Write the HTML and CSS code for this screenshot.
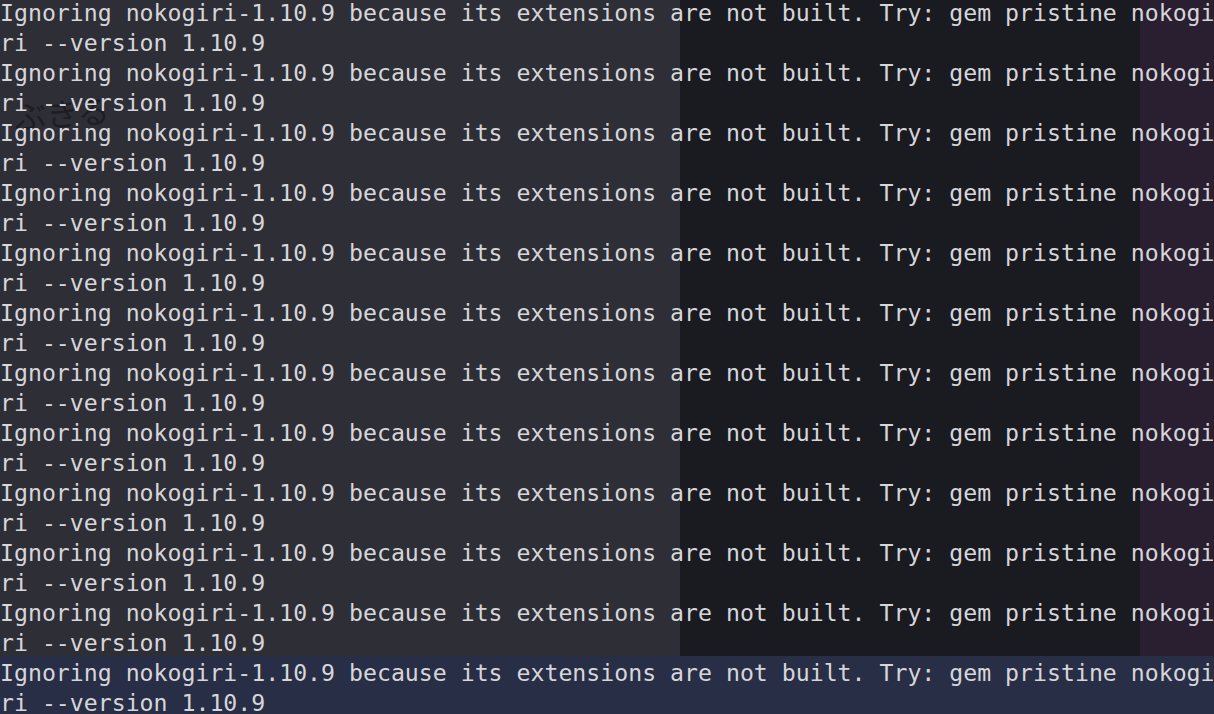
FILE: index.html
```html
<!DOCTYPE html>
<html lang="en">
<head>
<meta charset="utf-8">
<title>Terminal</title>
<link rel="stylesheet" href="styles.css">
</head>
<body>
<div class="screen">
  <div class="ghost">ぶきる</div>
  <div class="term">
    <div class="entry"><div class="line">Ignoring nokogiri-1.10.9 because its extensions are not built. Try: gem pristine nokogi</div><div class="line">ri --version 1.10.9</div></div>
    <div class="entry"><div class="line">Ignoring nokogiri-1.10.9 because its extensions are not built. Try: gem pristine nokogi</div><div class="line">ri --version 1.10.9</div></div>
    <div class="entry"><div class="line">Ignoring nokogiri-1.10.9 because its extensions are not built. Try: gem pristine nokogi</div><div class="line">ri --version 1.10.9</div></div>
    <div class="entry"><div class="line">Ignoring nokogiri-1.10.9 because its extensions are not built. Try: gem pristine nokogi</div><div class="line">ri --version 1.10.9</div></div>
    <div class="entry"><div class="line">Ignoring nokogiri-1.10.9 because its extensions are not built. Try: gem pristine nokogi</div><div class="line">ri --version 1.10.9</div></div>
    <div class="entry"><div class="line">Ignoring nokogiri-1.10.9 because its extensions are not built. Try: gem pristine nokogi</div><div class="line">ri --version 1.10.9</div></div>
    <div class="entry"><div class="line">Ignoring nokogiri-1.10.9 because its extensions are not built. Try: gem pristine nokogi</div><div class="line">ri --version 1.10.9</div></div>
    <div class="entry"><div class="line">Ignoring nokogiri-1.10.9 because its extensions are not built. Try: gem pristine nokogi</div><div class="line">ri --version 1.10.9</div></div>
    <div class="entry"><div class="line">Ignoring nokogiri-1.10.9 because its extensions are not built. Try: gem pristine nokogi</div><div class="line">ri --version 1.10.9</div></div>
    <div class="entry"><div class="line">Ignoring nokogiri-1.10.9 because its extensions are not built. Try: gem pristine nokogi</div><div class="line">ri --version 1.10.9</div></div>
    <div class="entry"><div class="line">Ignoring nokogiri-1.10.9 because its extensions are not built. Try: gem pristine nokogi</div><div class="line">ri --version 1.10.9</div></div>
    <div class="entry current"><div class="line">Ignoring nokogiri-1.10.9 because its extensions are not built. Try: gem pristine nokogi</div><div class="line">ri --version 1.10.9</div></div>
  </div>
</div>
</body>
</html>
```

FILE: styles.css
```css
html, body {
  margin: 0;
  padding: 0;
  width: 1214px;
  height: 714px;
  overflow: hidden;
}

body {
  background: linear-gradient(to right, #2e2e36 0, #2e2e36 680px, #1a1a21 680px, #1a1a21 1140px, #2a1f31 1140px);
}

.screen {
  position: relative;
  height: 714px;
  overflow: hidden;
}

.ghost {
  position: absolute;
  left: 14px;
  top: 92px;
  font-family: "Noto Sans CJK JP", sans-serif;
  font-size: 32px;
  line-height: 40px;
  color: rgba(8, 8, 12, 0.45);
  transform: rotate(-4deg);
  pointer-events: none;
}

.term {
  position: relative;
  margin-top: -2px;
  font-family: "DejaVu Sans Mono", monospace;
  font-size: 23.2px;
  line-height: 30px;
  color: #d6d6da;
}

.entry {
  display: flex;
  flex-direction: column;
}

.entry.current {
  background: #282e45;
  padding-top: 2px;
  margin-top: -2px;
  height: 80px;
}

.line {
  height: 30px;
  white-space: pre;
  overflow: hidden;
}
```
